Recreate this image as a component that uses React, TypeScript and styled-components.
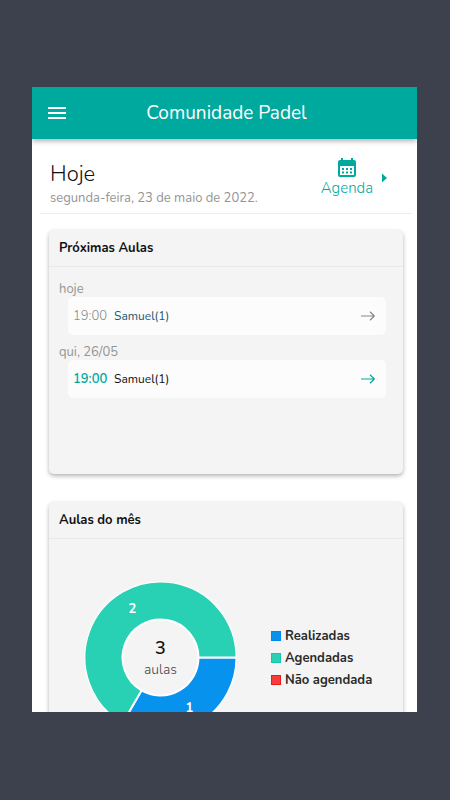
import React from "react";
import styled, { createGlobalStyle } from "styled-components";

const teal = "#00a99d";

const GlobalStyle = createGlobalStyle`
  *, *::before, *::after { box-sizing: border-box; }
  body {
    margin: 0;
    background: #3c414d;
    font-family: Nunito, "Open Sans", "Noto Sans", sans-serif;
    color: #111;
  }
  h1, h2, h3, p, ul { margin: 0; padding: 0; }
  button { font: inherit; border: 0; padding: 0; background: none; cursor: pointer; }
`;

const Stage = styled.div`
  display: flex;
  height: 100vh;
  padding: 87px 33px 88px 32px;
`;

const Screen = styled.main`
  flex: 1;
  min-width: 0;
  overflow: hidden;
  background: #fff;
`;

const AppBar = styled.header`
  display: grid;
  grid-template-columns: 50px 1fr 46px;
  align-items: center;
  height: 52px;
  background: ${teal};
  color: #fff;
  box-shadow: 0 2px 5px rgba(0, 0, 0, 0.32);
`;

const MenuButton = styled.button`
  display: flex;
  justify-content: center;
  color: #fff;
`;

const AppTitle = styled.h1`
  font-size: 19px;
  line-height: 24px;
  font-weight: 400;
  text-align: center;
  white-space: nowrap;
`;

const DayBar = styled.section`
  display: flex;
  justify-content: space-between;
  margin: 0 5px 0 8px;
  padding: 19px 25px 0 10px;
  height: 75px;
  border-bottom: 1px solid #ededed;
`;

const DayTitle = styled.h2`
  margin-top: 2px;
  font-size: 22px;
  line-height: 28px;
  font-weight: 300;
`;

const DayDate = styled.p`
  font-size: 13px;
  line-height: 20px;
  font-weight: 400;
  color: #959595;
  white-space: nowrap;
`;

const AgendaButton = styled.button`
  display: flex;
  align-items: center;
  align-self: flex-start;
  gap: 9px;
  color: ${teal};
  font-size: 15px;
  line-height: 20px;
  font-weight: 300;
`;

const AgendaLabel = styled.span`
  display: flex;
  flex-direction: column;
  align-items: center;
`;

const Cards = styled.div`
  display: flex;
  flex-direction: column;
  gap: 28px;
  padding: 16px 14px 28px 17px;
`;

const Card = styled.section`
  min-height: 244px;
  border-radius: 5px;
  background: #f4f4f4;
  box-shadow: 0 2px 4px rgba(0, 0, 0, 0.3);
`;

const CardTitle = styled.h3`
  padding: 7px 10px;
  border-bottom: 1px solid #e8e8e8;
  font-size: 13px;
  line-height: 22px;
  font-weight: 700;
`;

const LessonDays = styled.div`
  display: flex;
  flex-direction: column;
  gap: 5px;
  padding: 12px 17px 12px 10px;
`;

const DayLabel = styled.p`
  font-size: 13px;
  line-height: 20px;
  height: 18px;
  font-weight: 400;
  color: #959595;
`;

const LessonDay = styled.div`
  padding-bottom: 2px;
`;

const Lesson = styled.button<{ $upcoming?: boolean }>`
  display: flex;
  align-items: center;
  gap: 8px;
  width: calc(100% - 9px);
  height: 38px;
  margin-left: 9px;
  padding: 0 11px 0 5px;
  border-radius: 5px;
  background: #fcfcfc;
  font-size: 12px;
  line-height: 18px;
  color: ${(p) => (p.$upcoming ? teal : "#888")};

  svg { margin-left: auto; }
`;

const Time = styled.span<{ $upcoming?: boolean }>`
  width: 33px;
  font-size: 13px;
  font-weight: ${(p) => (p.$upcoming ? 600 : 300)};
  text-align: left;
`;

const Student = styled.span<{ $upcoming?: boolean }>`
  color: ${(p) => (p.$upcoming ? "#111" : "#245870")};
`;

const ChartArea = styled.div`
  display: flex;
  align-items: center;
  gap: 34px;
  padding: 42px 10px 42px 35px;
`;

const Donut = styled.svg`
  flex: none;
  text-anchor: middle;
`;

const SliceCount = styled.text`
  fill: #fff;
  font-size: 13px;
  font-weight: 700;
`;

const Total = styled.text`
  fill: #111;
  font-size: 18px;
  font-weight: 600;
`;

const TotalLabel = styled.text`
  fill: #444;
  font-size: 14px;
  font-weight: 300;
`;

const Legend = styled.ul`
  list-style: none;
`;

const LegendItem = styled.li<{ $fill: string; $edge: string }>`
  display: flex;
  align-items: center;
  gap: 4px;
  font-size: 13px;
  line-height: 22px;
  font-weight: 700;
  color: #2a2a2a;
  white-space: nowrap;

  &::before {
    content: "";
    width: 10px;
    height: 10px;
    background: ${(p) => p.$fill};
    border: 1px solid ${(p) => p.$edge};
  }
`;

const MenuIcon = () => (
  <svg width="18" height="12" viewBox="0 0 18 12" fill="currentColor" aria-hidden="true">
    <path d="M0 0h18v2H0zM0 5h18v2H0zM0 10h18v2H0z" />
  </svg>
);

const CalendarIcon = () => (
  <svg width="18" height="20" viewBox="0 0 18 20" aria-hidden="true">
    <path
      fill="currentColor"
      fillRule="evenodd"
      d="M3 0h2v2h8V0h2v2h1a2 2 0 0 1 2 2v13a2 2 0 0 1-2 2H2a2 2 0 0 1-2-2V4a2 2 0 0 1 2-2h1zM2 8v9h14V8zM4 10h2v2H4zM8 10h2v2H8zM12 10h2v2h-2zM4 13.500h2v2H4zM8 13.500h2v2H8zM12 13.500h2v2h-2z"
    />
  </svg>
);

const CaretIcon = () => (
  <svg width="5" height="10" viewBox="0 0 5 10" fill="currentColor" aria-hidden="true">
    <path d="M0 .5 5 5 0 9.500z" />
  </svg>
);

const ArrowIcon = () => (
  <svg width="14" height="10" viewBox="0 0 14 10" fill="none" stroke="currentColor" strokeWidth="1.200" aria-hidden="true">
    <path d="M0 5h13.300M9 .8 13.300 5 9 9.200" strokeLinejoin="round" />
  </svg>
);

const lessonDays = [
  { label: "hoje", time: "19:00", student: "Samuel(1)", upcoming: false },
  { label: "qui, 26/05", time: "19:00", student: "Samuel(1)", upcoming: true },
];

const legend = [
  { label: "Realizadas", fill: "#0792ee", edge: "#0088ee" },
  { label: "Agendadas", fill: "#28d0b4", edge: "#12c9aa" },
  { label: "Não agendada", fill: "#f53b3b", edge: "#e81c1c" },
];

export default function App() {
  return (
    <>
      <GlobalStyle />
      <Stage>
        <Screen>
          <AppBar>
            <MenuButton aria-label="Menu">
              <MenuIcon />
            </MenuButton>
            <AppTitle>Comunidade Padel</AppTitle>
          </AppBar>
          <DayBar>
            <div>
              <DayTitle>Hoje</DayTitle>
              <DayDate>segunda-feira, 23 de maio de 2022.</DayDate>
            </div>
            <AgendaButton>
              <AgendaLabel>
                <CalendarIcon />
                Agenda
              </AgendaLabel>
              <CaretIcon />
            </AgendaButton>
          </DayBar>
          <Cards>
            <Card>
              <CardTitle>Próximas Aulas</CardTitle>
              <LessonDays>
                {lessonDays.map((day) => (
                  <LessonDay key={day.label}>
                    <DayLabel>{day.label}</DayLabel>
                    <Lesson $upcoming={day.upcoming}>
                      <Time $upcoming={day.upcoming}>{day.time}</Time>
                      <Student $upcoming={day.upcoming}>{day.student}</Student>
                      <ArrowIcon />
                    </Lesson>
                  </LessonDay>
                ))}
              </LessonDays>
            </Card>
            <Card>
              <CardTitle>Aulas do mês</CardTitle>
              <ChartArea>
                <Donut width="153" height="153" viewBox="-76.5 -76.5 153 153" role="img" aria-label="3 aulas">
                  <g stroke="#fff" strokeWidth="2">
                    <path fill="#0792ee" d="M76 0A76 76 0 0 1-38 65.800L-19 32.900A38 38 0 0 0 38 0z" />
                    <path fill="#28d0b4" d="M-38 65.800A76 76 0 1 1 76 0L38 0A38 38 0 1 0-19 32.900z" />
                  </g>
                  <circle r="76.500" fill="none" stroke="#f4f4f4" strokeWidth="1" />
                  <SliceCount x="-28" y="-45">2</SliceCount>
                  <SliceCount x="29" y="54">1</SliceCount>
                  <Total x="0" y="-4">3</Total>
                  <TotalLabel x="0" y="16">aulas</TotalLabel>
                </Donut>
                <Legend>
                  {legend.map((item) => (
                    <LegendItem key={item.label} $fill={item.fill} $edge={item.edge}>
                      {item.label}
                    </LegendItem>
                  ))}
                </Legend>
              </ChartArea>
            </Card>
          </Cards>
        </Screen>
      </Stage>
    </>
  );
}
